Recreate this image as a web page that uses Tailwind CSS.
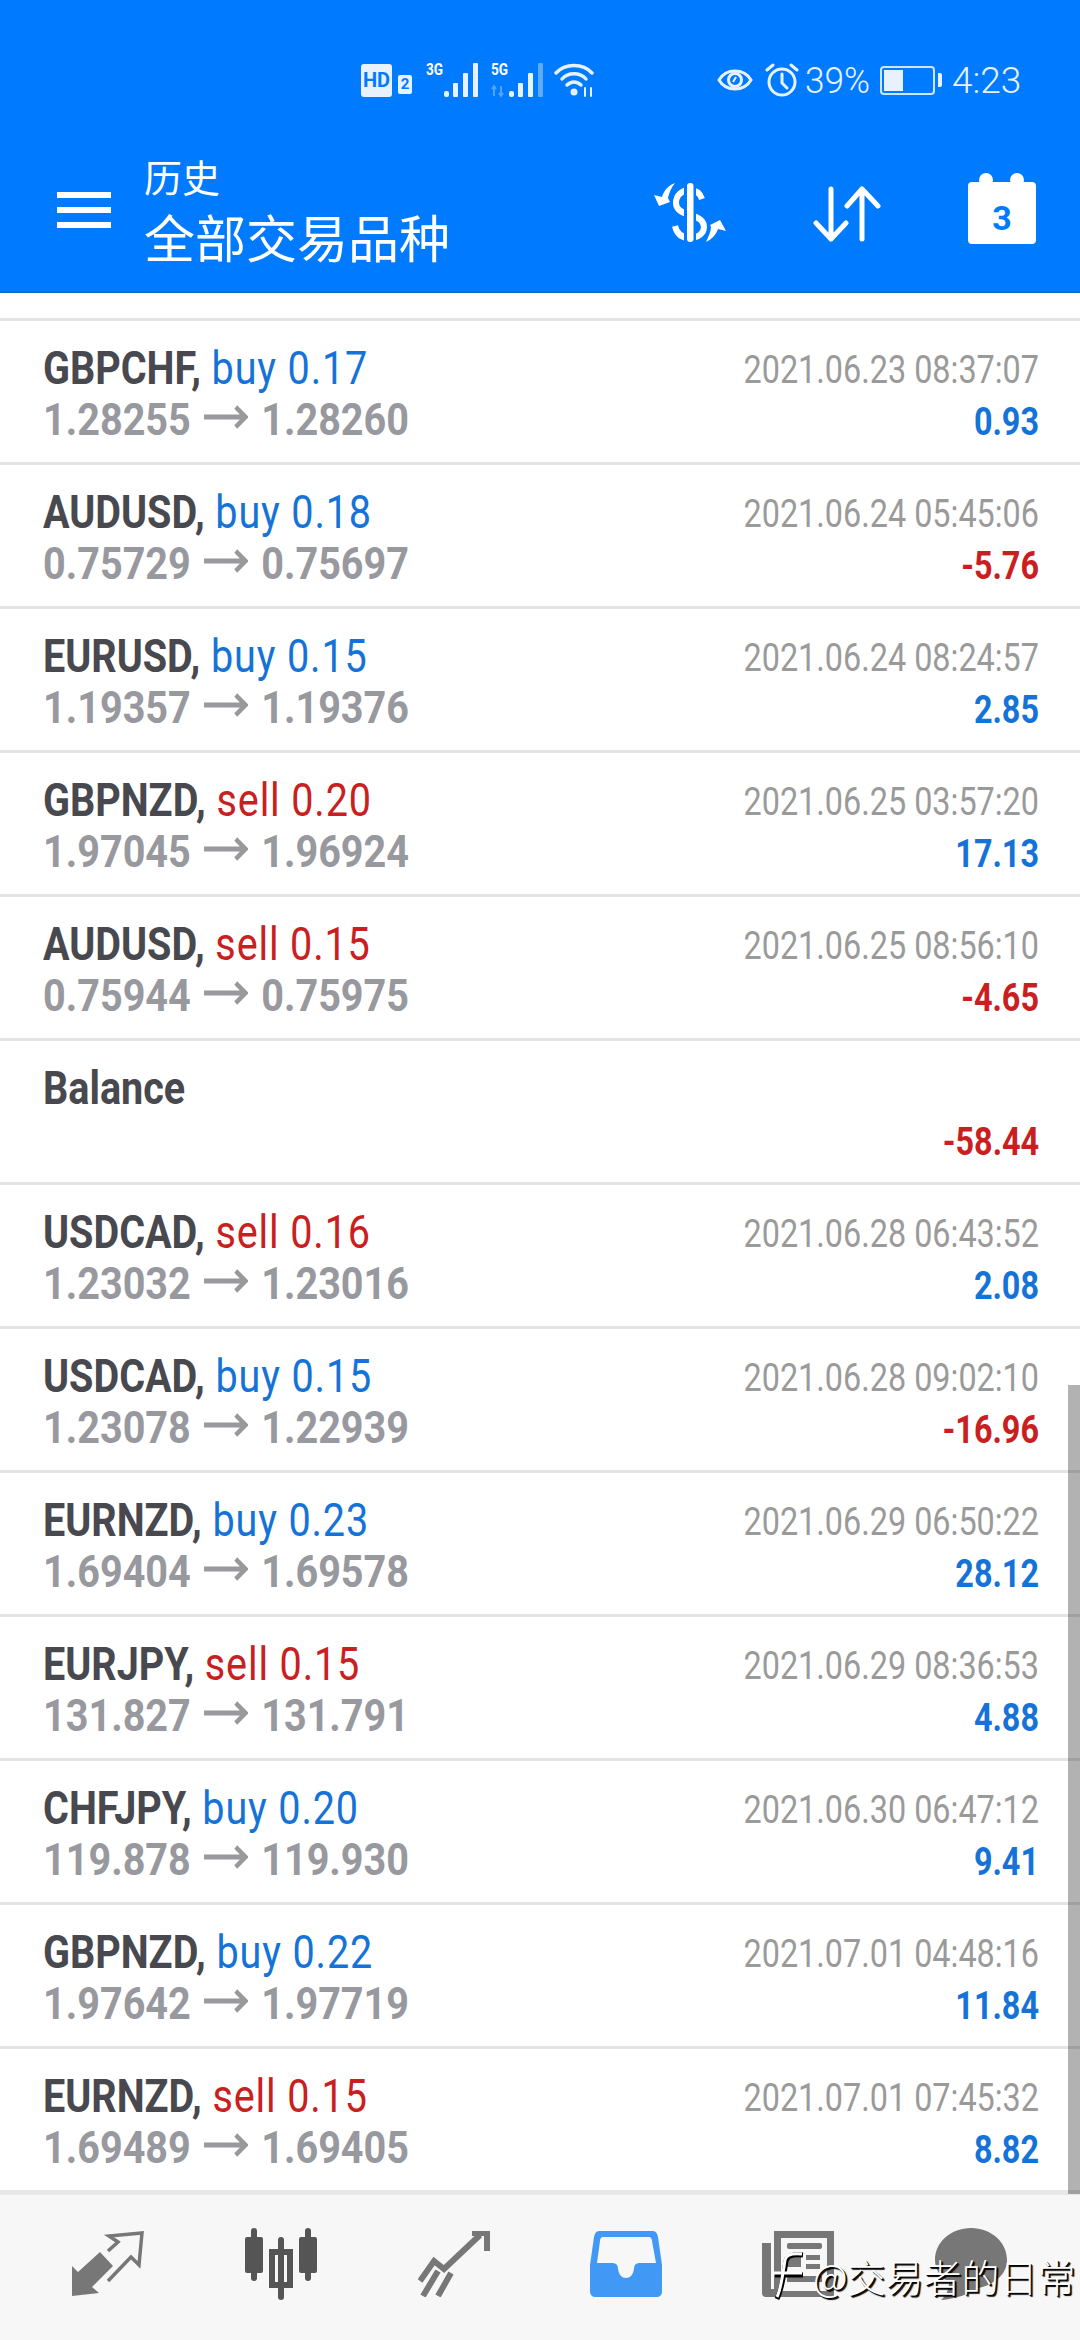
<!DOCTYPE html>
<html lang="zh-CN">
<head>
  <meta charset="UTF-8" />
  <title>历史</title>
  <script src="https://cdn.jsdelivr.net/npm/@tailwindcss/browser@4"></script>
</head>
<body class="bg-white font-['Roboto','Noto_Sans_CJK_SC',sans-serif]">
<div class="relative w-[1080px] h-[2340px] overflow-hidden flex flex-col">

  <!-- header -->
  <header class="h-[293px] shrink-0 bg-[#007aff] border-b-[2px] border-[#0a6cc9] text-white">
    <div class="flex items-center h-[36px] mt-[62px] pl-[361px]">
      <div class="w-[31px] h-[33px] bg-[#e8f2ff] rounded-[3px] flex items-center justify-center text-[#007aff] text-[20px] font-bold leading-none">HD</div>
      <div class="ml-[6px] w-[14px] h-[19px] mt-[9px] bg-[#e8f2ff] rounded-[2px] flex items-center justify-center text-[#007aff] text-[15px] font-bold leading-none">2</div>
      <div class="relative ml-[14px] w-[53px] h-[36px]">
        <span class="absolute left-0 top-0 text-[16px] font-bold leading-none scale-x-[.85] origin-left">3G</span>
        <svg class="absolute left-0 top-0" width="53" height="36" viewBox="0 0 53 36" fill="#e8f2ff"><rect x="18" y="29" width="5" height="6" rx="2"/><rect x="27" y="21" width="5" height="14" rx="1"/><rect x="37" y="11" width="5" height="24" rx="1"/><rect x="47" y="1" width="5" height="34" rx="1"/></svg>
      </div>
      <div class="relative ml-[12px] w-[53px] h-[36px]">
        <span class="absolute left-0 top-0 text-[16px] font-bold leading-none scale-x-[.85] origin-left">5G</span>
        <svg class="absolute left-0 top-0" width="53" height="36" viewBox="0 0 53 36" fill="#e8f2ff"><rect x="18" y="29" width="5" height="6" rx="2"/><rect x="27" y="21" width="5" height="14" rx="1"/><rect x="37" y="11" width="5" height="24" rx="1"/><rect x="47" y="1" width="5" height="34" rx="1" opacity=".4"/><path d="M3 34V24M10 34V24M1 27l2-3 2 3M8 31l2 3 2-3" stroke="#e8f2ff" stroke-width="2" fill="none" opacity=".35"/></svg>
      </div>
      <svg class="ml-[10px]" width="40" height="34" viewBox="0 0 40 34" fill="none" stroke="#e8f2ff" stroke-width="3.4" stroke-linecap="round"><path d="M2 10C11 0 29 0 38 10"/><path d="M8 16C14 9 26 9 32 16"/><path d="M13 22C17 18 23 18 27 22"/><circle cx="20" cy="29" r="3.5" fill="#e8f2ff" stroke="none"/><path d="M31 33v-8M37 25v8" stroke-width="2"/></svg>
      <svg class="ml-[123px]" width="36" height="30" viewBox="0 0 36 30" fill="none" stroke="#e8f2ff" stroke-width="3"><path d="M2 15C9 3 27 3 34 15C27 27 9 27 2 15Z"/><circle cx="18" cy="15" r="6.5"/><path d="M16 17l3-5" stroke-width="2"/></svg>
      <svg class="ml-[12px]" width="34" height="34" viewBox="0 0 34 34" fill="none" stroke="#e8f2ff" stroke-width="3" stroke-linecap="round"><circle cx="17" cy="19" r="13"/><path d="M17 11v9l5 5M2 7l6-5M32 7l-6-5"/></svg>
      <div class="ml-[6px] w-[65px] text-[37px] leading-none text-[#e8f2ff] font-light scale-x-[.95] origin-left whitespace-nowrap">39%</div>
      <div class="ml-[10px] flex items-center">
        <div class="w-[55px] h-[29px] border-2 border-[#cfe5ff] rounded-[4px] p-[2px]"><div class="w-[19px] h-full bg-[#e8f2ff]"></div></div>
        <div class="ml-[3px] w-[4px] h-[14px] bg-[#e8f2ff] rounded-r-[2px]"></div>
      </div>
      <div class="ml-[10px] w-[67px] text-[37px] leading-none text-[#e8f2ff] font-light whitespace-nowrap">4:23</div>
    </div>

    <div class="flex items-start mt-[64px]">
      <div class="ml-[57px] mt-[30px] w-[54px] h-[36px] flex flex-col justify-between">
        <div class="h-[6px] bg-white"></div>
        <div class="h-[6px] bg-white"></div>
        <div class="h-[6px] bg-white"></div>
      </div>
      <div class="ml-[33px] w-[306px] -mt-[8px]">
        <div class="text-[38px] leading-[44px] font-['Noto_Sans_CJK_SC',sans-serif] font-normal">历史</div>
        <div class="text-[51px] leading-[60px] mt-[8px] font-['Noto_Sans_CJK_SC',sans-serif] font-normal whitespace-nowrap">全部交易品种</div>
      </div>
      <svg class="ml-[190px] mt-[11px]" width="100" height="90" viewBox="0 0 100 90" fill="#fff">
        <path d="M62 26C60 20 56 17 50 17C42 17 36 22 36 30C36 37 42 40 50 42C58 44 64 47 64 54C64 61 57 65 50 65C43 65 37 62 35 53" fill="none" stroke="#fff" stroke-width="6"/>
        <rect x="44" y="10" width="12" height="59" fill="#007aff"/>
        <rect x="47" y="10" width="6.5" height="59" rx="3"/>
        <path d="M14 22L22 24C24 17 29 12 35 10C31 15 29 20 28 25L30 29L19 33Z"/>
        <path d="M86 58L78 56C76 62 71 67 66 69C68 64 71 59 71 54L70 52L80 47Z"/>
      </svg>
      <svg class="ml-[73px] mt-[24px]" width="68" height="56" viewBox="0 0 68 56" fill="none" stroke="#fff" stroke-width="5" stroke-linecap="round" stroke-linejoin="round">
        <path d="M18 3V53M3 37L18 53L33 37"/>
        <path d="M49 53V3M34 20L49 3L65 20"/>
      </svg>
      <div class="ml-[87px] mt-[11px] relative w-[68px] h-[71px]">
        <div class="absolute left-[11px] top-0 w-[14px] h-[14px] rounded-full bg-white"></div>
        <div class="absolute left-[42px] top-0 w-[14px] h-[14px] rounded-full bg-white"></div>
        <div class="absolute left-0 top-[9px] w-[68px] h-[62px] bg-white rounded-[4px] flex items-center justify-center text-[#007aff] text-[34px] font-bold leading-none pt-[10px]">3</div>
      </div>
    </div>
  </header>

  <!-- trade list -->
  <main id="list" class="h-[1897px] shrink-0 pt-[25px]">
    <div class="border-b-[3px] border-[#e4e4e4]"></div>
  </main>

  <!-- bottom nav -->
  <nav class="flex-1 bg-[#f7f7f7] border-t-[5px] border-[#e6e6e6] px-[23px] grid grid-cols-6 justify-items-center pt-[36px]">
    <svg width="74" height="66" viewBox="24 18 74 66" fill="#777">
      <path d="M24 53L30 59L52 39L65 53L44 74L51 80L24 83Z"/>
      <path d="M60 38L70 29L61 23L94 20L91 52L83 44L60 68" fill="none" stroke="#777" stroke-width="3.5"/>
    </svg>
    <svg width="72" height="72" viewBox="0 0 72 72" fill="#555" class="-mt-[3px]">
      <rect x="6" y="0" width="6" height="53" rx="3"/><rect x="0" y="9" width="18" height="36" rx="2"/>
      <rect x="33" y="9" width="6" height="63" rx="3"/><path d="M24 21H48V60H24ZM30 27V54H42V27Z" fill-rule="evenodd"/>
      <rect x="60" y="0" width="6" height="53" rx="3"/><rect x="54" y="9" width="18" height="36" rx="2"/>
    </svg>
    <svg width="72" height="66" viewBox="0 0 72 66" fill="none" stroke="#777" stroke-width="6">
      <path d="M2 50L16 30L26 38L62 4"/><path d="M54 2H69V20" /><path d="M20 40L5 65M33 42L20 65"/>
    </svg>
    <svg width="72" height="66" viewBox="0 0 72 66">
      <path d="M10 0H62C66 0 67 2 68 6L72 34V60C72 64 70 66 66 66H6C2 66 0 64 0 60V34L4 6C5 2 6 0 10 0Z" fill="#4299f5"/>
      <path d="M13 6H59C61 6 62 8 62 10L66 32H50C46 32 44 34 44 38C43 44 40 47 36 47C32 47 29 44 28 38C28 34 26 32 22 32H7L10 10C10 8 11 6 13 6Z" fill="#f7f7f7"/>
    </svg>
    <svg width="72" height="66" viewBox="0 0 72 66" fill="#777">
      <path d="M12 0H72V66H4C1 66 0 64 0 62V12H9V58H12Z"/>
      <path d="M19 7H65V60H19Z" fill="#f7f7f7"/>
      <rect x="25" y="12" width="35" height="6" rx="2"/><rect x="25" y="24" width="14" height="12"/><rect x="44" y="24" width="14" height="5"/><rect x="44" y="33" width="14" height="5"/><rect x="25" y="45" width="35" height="6"/>
    </svg>
    <svg width="72" height="72" viewBox="0 0 72 72" fill="#777" class="-mt-[3px]">
      <path d="M36 0C56 0 72 14 72 32C72 46 60 56 44 60C34 66 20 71 6 72C11 68 14 62 14 54C5 49 0 41 0 32C0 14 16 0 36 0Z"/>
    </svg>
  </nav>

  <!-- scrollbar -->
  <div class="absolute right-0 top-[1385px] w-[12px] h-[809px] bg-black/30"></div>

  <!-- watermark -->
  <div class="absolute left-[773px] top-[2251px] flex items-center text-white font-['Noto_Sans_CJK_SC',sans-serif] font-light text-[38px] leading-[50px] whitespace-nowrap [text-shadow:1px_1px_0_#000,2px_2px_1px_#000]">
    <svg class="mr-[6px]" width="34" height="50" viewBox="0 0 34 50" fill="none" stroke="#fff" stroke-width="3"><path d="M4 48C8 40 11 24 13 10C14 5 20 3 30 4M2 24H30" stroke="#000" stroke-width="5"/><path d="M4 46C8 38 10 22 12 9C13 4 19 2 29 3M1 22H29"/></svg>
    <span>@交易者的日常</span>
  </div>
</div>

<script>
  const trades = [
    ['GBPCHF', 'buy', '0.17', '1.28255', '1.28260', '2021.06.23 08:37:07', '0.93'],
    ['AUDUSD', 'buy', '0.18', '0.75729', '0.75697', '2021.06.24 05:45:06', '-5.76'],
    ['EURUSD', 'buy', '0.15', '1.19357', '1.19376', '2021.06.24 08:24:57', '2.85'],
    ['GBPNZD', 'sell', '0.20', '1.97045', '1.96924', '2021.06.25 03:57:20', '17.13'],
    ['AUDUSD', 'sell', '0.15', '0.75944', '0.75975', '2021.06.25 08:56:10', '-4.65'],
    ['Balance', '', '', '', '', '', '-58.44'],
    ['USDCAD', 'sell', '0.16', '1.23032', '1.23016', '2021.06.28 06:43:52', '2.08'],
    ['USDCAD', 'buy', '0.15', '1.23078', '1.22939', '2021.06.28 09:02:10', '-16.96'],
    ['EURNZD', 'buy', '0.23', '1.69404', '1.69578', '2021.06.29 06:50:22', '28.12'],
    ['EURJPY', 'sell', '0.15', '131.827', '131.791', '2021.06.29 08:36:53', '4.88'],
    ['CHFJPY', 'buy', '0.20', '119.878', '119.930', '2021.06.30 06:47:12', '9.41'],
    ['GBPNZD', 'buy', '0.22', '1.97642', '1.97719', '2021.07.01 04:48:16', '11.84'],
    ['EURNZD', 'sell', '0.15', '1.69489', '1.69405', '2021.07.01 07:45:32', '8.82'],
  ];

  const arrow = `<svg class="inline-block mx-[15px] align-[6px]" width="50" height="24" viewBox="0 0 50 24" fill="none" stroke="#98989f" stroke-width="5"><path d="M0 12H47M36 2L47 12L36 22"/></svg>`;

  const list = document.getElementById('list');
  trades.forEach(t => {
    const [sym, side, lots, open, close, time, profit] = t;
    const sideColor = side === 'buy' ? 'text-[#1573d8]' : 'text-[#c9201f]';
    const profitColor = profit.startsWith('-') ? 'text-[#c9201f]' : 'text-[#1573d8]';
    const title = side
      ? `${sym},<span class="font-normal tracking-[1px] ${sideColor}"> ${side} ${lots}</span>`
      : sym;
    const prices = open ? `${open}${arrow}${close}` : '';
    const row = document.createElement('div');
    row.className = 'h-[144px] border-b-[3px] border-[#e4e4e4] flex justify-between pl-[43px] pr-[41px] pt-[22px]';
    row.innerHTML = `
      <div class="whitespace-nowrap -mt-[1px]">
        <div class="h-[52px] text-[46px] leading-[52px] font-bold text-[#48484f] scale-x-[.86] origin-left">${title}</div>
        <div class="h-[52px] text-[45px] leading-[52px] font-bold text-[#98989f] scale-x-[.88] origin-left">${prices}</div>
      </div>
      <div class="whitespace-nowrap text-right mt-[1px]">
        <div class="h-[52px] text-[39px] leading-[52px] text-[#9a9a9a] scale-x-[.83] origin-right">${time}</div>
        <div class="h-[52px] text-[39px] leading-[52px] font-bold ${profitColor} scale-x-[.83] origin-right">${profit}</div>
      </div>`;
    list.appendChild(row);
  });
</script>
</body>
</html>
